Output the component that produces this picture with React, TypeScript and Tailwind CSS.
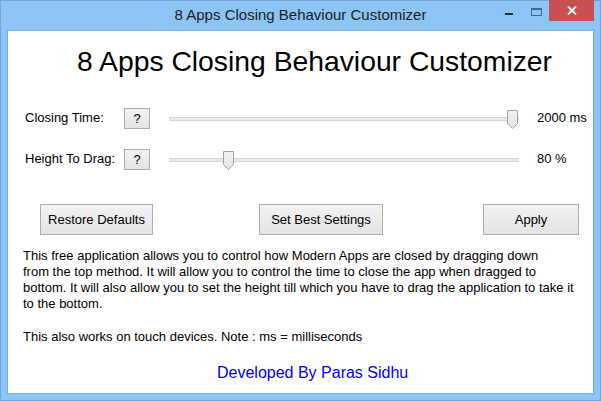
import React from 'react'

const FONT = "font-['Liberation_Sans',Arial,sans-serif]"

type SliderRow = {
  label: string
  value: string
  thumbLeft: string
}

const rows: SliderRow[] = [
  { label: 'Closing Time:', value: '2000 ms', thumbLeft: 'left-[338px]' },
  { label: 'Height To Drag:', value: '80 %', thumbLeft: 'left-[54px]' }
]

function Thumb() {
  return (
    <svg width="11" height="19" viewBox="0 0 11 19">
      <defs>
        <linearGradient id="thumbFill" x1="0" y1="0" x2="0" y2="1">
          <stop offset="0" stopColor="#f3f3f3" />
          <stop offset="1" stopColor="#e2e2e2" />
        </linearGradient>
      </defs>
      <path
        d="M0.5 0.5 H10.5 V13.5 L5.5 18.5 L0.5 13.5 Z"
        fill="url(#thumbFill)"
        stroke="#a3a3a3"
      />
    </svg>
  )
}

function WinButton({ children, className = '' }: { children: React.ReactNode; className?: string }) {
  return (
    <div
      className={`flex items-center justify-center border border-[#acacac] bg-linear-to-b from-[#f2f2f2] to-[#e4e4e4] text-[13px] text-black ${className}`}
    >
      {children}
    </div>
  )
}

export default function App() {
  return (
    <div
      className={`flex h-[401px] w-[601px] flex-col border border-[#6fa6da] bg-[#8cc4f6] ${FONT}`}
    >
      {/* title bar */}
      <div className="relative flex h-[29px] items-center justify-center text-[15px] text-[#1c1c1c]">
        8 Apps Closing Behaviour Customizer
        <div className="absolute left-[504px] top-[12px] h-[2px] w-[8px] bg-[#2b2b2b]" />
        <div className="absolute left-[530px] top-[7px] h-[8px] w-[11px] border border-t-2 border-[#44698c]" />
        <div className="absolute right-[6px] top-[-1px] flex h-[21px] w-[45px] items-center justify-center bg-[#c75050]">
          <svg width="10" height="9" viewBox="0 0 10 9">
            <path d="M1 0.5 L9 8.5 M9 0.5 L1 8.5" stroke="#ffffff" strokeWidth="1.8" />
          </svg>
        </div>
      </div>

      {/* client area */}
      <div className="mx-[6px] h-[364px] border border-[#79addf] bg-white text-black">
        <h1 className="pl-[69px] pt-[14px] text-[28.3px] leading-[32px]">
          8 Apps Closing Behaviour Customizer
        </h1>

        <div className="mt-[31px] flex flex-col gap-[20px]">
          {rows.map(row => (
            <div key={row.label} className="flex h-[21px] items-center pl-[17px] text-[13px]">
              <div className="w-[99px] -translate-y-[1px] whitespace-nowrap">{row.label}</div>
              <WinButton className="h-[21px] w-[26px]">?</WinButton>
              <div className="relative ml-[19px] flex h-[21px] w-[350px] items-center">
                <div className="h-[4px] w-full border border-[#d6d6d6] bg-[#e9e9e9]" />
                <div className={`absolute top-[2px] ${row.thumbLeft}`}>
                  <Thumb />
                </div>
              </div>
              <div className="ml-[18px] -translate-y-[1px] whitespace-nowrap">{row.value}</div>
            </div>
          ))}
        </div>

        <div className="mt-[34px] flex">
          <WinButton className="ml-[32px] h-[31px] w-[113px]">Restore Defaults</WinButton>
          <WinButton className="ml-[106px] h-[31px] w-[124px]">Set Best Settings</WinButton>
          <WinButton className="ml-[100px] h-[31px] w-[96px]">Apply</WinButton>
        </div>

        <div className="mt-[13px] pl-[15px] text-[13px] leading-[16px] whitespace-nowrap">
          <p>
            This free application allows you to control how Modern Apps are closed by dragging down
            <br />
            from the top method. It will allow you to control the time to close the app when dragged to
            <br />
            bottom. It will also allow you to set the height till which you have to drag the application to take it
            <br />
            to the bottom.
          </p>
          <p className="mt-[17px]">This also works on touch devices. Note : ms = milliseconds</p>
        </div>

        <p className="mt-[18px] pl-[209px] text-[16px] leading-[20px] text-[#0000ff]">
          Developed By Paras Sidhu
        </p>
      </div>
    </div>
  )
}
